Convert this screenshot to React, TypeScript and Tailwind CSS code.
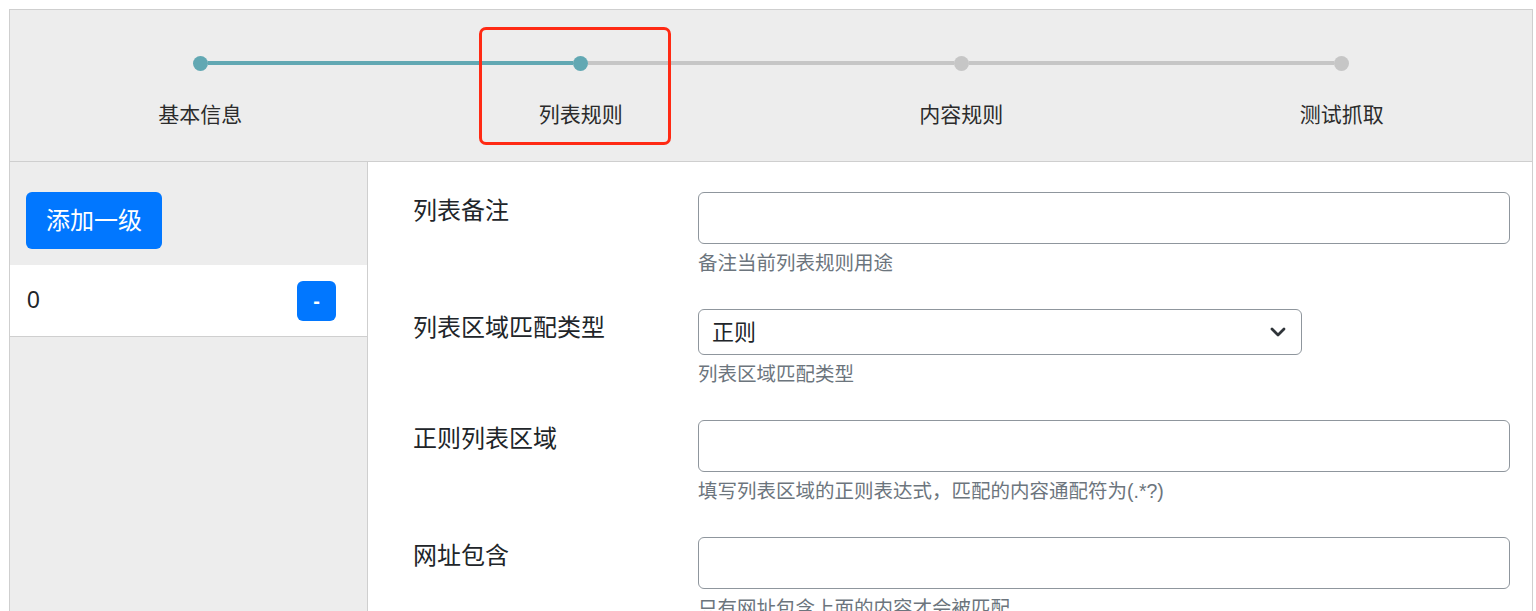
import { ChevronDown } from 'lucide-react';

const steps = ['基本信息', '列表规则', '内容规则', '测试抓取'];
const activeStep = 1;

const fields = [
  { label: '列表备注', help: '备注当前列表规则用途', kind: 'input' },
  { label: '列表区域匹配类型', help: '列表区域匹配类型', kind: 'select' },
  { label: '正则列表区域', help: '填写列表区域的正则表达式，匹配的内容通配符为(.*?)', kind: 'input' },
  { label: '网址包含', help: '只有网址包含上面的内容才会被匹配', kind: 'input' },
];

function StepBar() {
  return (
    <div className="grid grid-cols-4 h-[152px] bg-[#ededed] border-b border-[#cfcfcf]">
      {steps.map((name, i) => {
        const leftOn = i <= activeStep;
        const rightOn = i < activeStep;
        const dotOn = i <= activeStep;
        return (
          <div key={name} className="relative flex flex-col items-center">
            <div className="flex items-center w-full mt-[46px] h-[14px]">
              <div className="flex-1 h-[4px]">
                {i > 0 && <div className={`h-full ${leftOn ? 'bg-[#62a8b3]' : 'bg-[#c6c6c6]'}`} />}
              </div>
              <div className={`w-[15px] h-[15px] rounded-full shrink-0 ${dotOn ? 'bg-[#62a8b3]' : 'bg-[#c6c6c6]'}`} />
              <div className="flex-1 h-[4px]">
                {i < steps.length - 1 && <div className={`h-full ${rightOn ? 'bg-[#62a8b3]' : 'bg-[#c6c6c6]'}`} />}
              </div>
            </div>
            <div className="mt-[30px] text-[21px] leading-[30px] text-[#2b2b2b]">{name}</div>
            {i === activeStep && (
              <div className="absolute left-[88px] top-[17px] w-[192px] h-[118px] border-[3px] border-[#ff2a14] rounded-[7px]" />
            )}
          </div>
        );
      })}
    </div>
  );
}

function Sidebar() {
  return (
    <div className="w-[358px] shrink-0 bg-[#ededed] border-r border-[#cfcfcf] pt-[30px]">
      <div className="px-[16px]">
        <button className="w-[136px] h-[57px] rounded-[6px] bg-[#0177ff] text-white text-[24px] leading-none">
          添加一级
        </button>
      </div>
      <div className="mt-[16px] h-[72px] bg-white border-b border-[#cfcfcf] flex items-center justify-between pl-[17px] pr-[31px]">
        <span className="text-[23px] text-[#212529]">0</span>
        <button className="w-[39px] h-[40px] rounded-[6px] bg-[#0177ff] text-white text-[20px] font-bold leading-none">
          -
        </button>
      </div>
    </div>
  );
}

function FormArea() {
  return (
    <div className="flex-1 bg-white pt-[30px] pl-[45px] pr-[22px] h-[480px] overflow-hidden">
      {fields.map(f => (
        <div key={f.label} className="flex mb-[34px]">
          <div className="w-[285px] shrink-0 text-[24px] leading-[36px] text-[#212529] pt-[1px]">{f.label}</div>
          <div className="flex-1">
            {f.kind === 'select' ? (
              <div className="w-[604px] h-[46px] border border-[#8f969d] rounded-[6px] flex items-center justify-between pl-[13px] pr-[11px]">
                <span className="text-[22px] text-[#212529]">正则</span>
                <ChevronDown className="w-[24px] h-[24px] text-[#2f3439]" strokeWidth={2.8} />
              </div>
            ) : (
              <div className="h-[52px] border border-[#8f969d] rounded-[6px] bg-white" />
            )}
            <div className="mt-[7px] text-[19.5px] leading-[24px] text-[#6c757d]">{f.help}</div>
          </div>
        </div>
      ))}
    </div>
  );
}

export default function App() {
  return (
    <div
      className="bg-white h-[611px] overflow-hidden pt-[9px] pl-[9px]"
      style={{ fontFamily: '"Liberation Sans", "Noto Sans CJK SC", sans-serif' }}
    >
      <div className="w-[1524px] border border-[#cfcfcf]">
        <StepBar />
        <div className="flex">
          <Sidebar />
          <FormArea />
        </div>
      </div>
    </div>
  );
}
